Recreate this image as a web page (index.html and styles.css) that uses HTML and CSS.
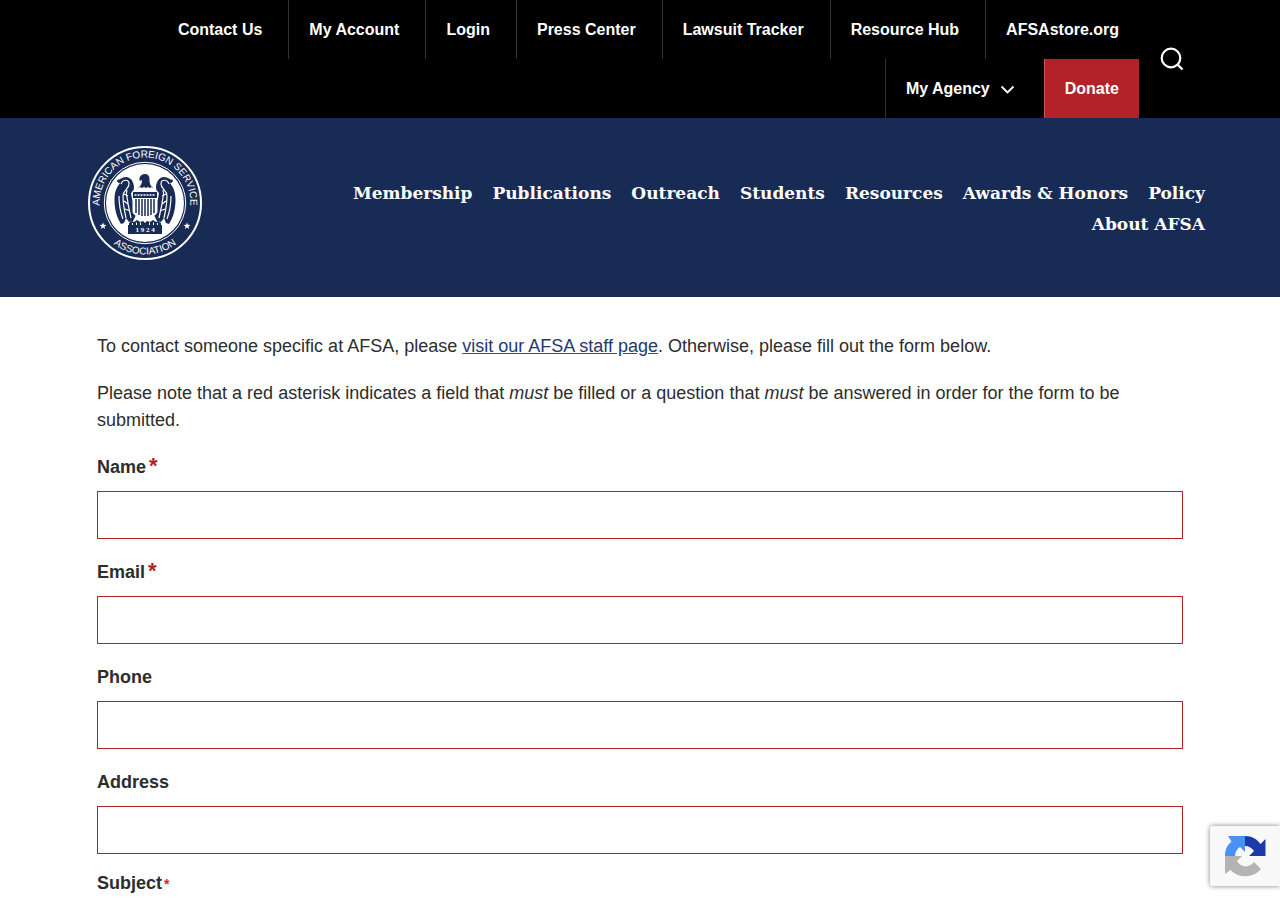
FILE: index.html
```html
<!DOCTYPE html>
<html lang="en">
<head>
<meta charset="utf-8">
<meta name="viewport" content="width=device-width, initial-scale=1">
<title>Contact AFSA</title>
<link rel="stylesheet" href="styles.css">
</head>
<body>
<div class="topbar">
  <div class="topbar-inner">
    <nav class="utility" aria-label="Utility">
      <a href="#">Contact Us</a>
      <a href="#">My Account</a>
      <a href="#">Login</a>
      <a href="#">Press Center</a>
      <a href="#">Lawsuit Tracker</a>
      <a href="#">Resource Hub</a>
      <a href="#">AFSAstore.org</a>
      <a href="#" class="has-menu">My Agency
        <svg class="chevron" width="28" height="16" viewBox="0 0 28 16" aria-hidden="true"><path d="M11.500 5.500l6 6 6-6" fill="none" stroke="#fff" stroke-width="1.800"/></svg></a>
      <a href="#" class="donate">Donate</a>
    </nav>
    <button class="search" type="button" aria-label="Search">
      <svg width="24" height="24" viewBox="0 0 24 24" aria-hidden="true"><circle cx="11" cy="11" r="9.300" fill="none" stroke="#fff" stroke-width="2.200"/><path d="M17.500 17.500l5 5" stroke="#fff" stroke-width="2.400"/></svg>
    </button>
  </div>
</div>
<header class="masthead">
  <a href="#" class="logo" aria-label="American Foreign Service Association">
    <svg width="114" height="114" viewBox="0 0 114 114">
      <defs>
        <path id="arc-top" d="M14.200 72A45.400 45.400 0 1 1 99.800 72"/>
        <path id="arc-bottom" d="M8.300 74A51.600 51.600 0 0 0 105.700 74"/>
        <g id="wing">
          <path fill="#182b55" d="M46 42c0-6-3-11-8-11-4 0-6 3-9 3 0 2 1 3 3 3-4 5-5.500 10-5.500 17 0 9 2 17 6.500 24l3-1 2-5 3 4 4-1 3-6-1-9-3-7-1-6c2-2 3-3 3-6z"/>
          <path fill="none" stroke="#fff" stroke-width="1.200" d="M33 38c2-5 8-5 8 0 0 5-6 6-6 12 0 8 1 13 3 22M39 44c-2 5 1 8 1 14l3 14M31 50c0 8 1 15 4 23M36 48l4 2M36 55l4 3M37 63l5 2"/>
          <path fill="#182b55" d="M41 80v-3l3-2 2 1 3-2 3 2 3-1 2 2v3z"/>
          <path d="M44.500 77v2.500m4-3v3m4-3v3" stroke="#fff" stroke-width="1"/>
        </g>
        <path id="star" d="M0-3.600L.9-1.200 3.500-1.100 1.400.5 2.200 3 0 1.500-2.200 3-1.400.5-3.500-1.100-.9-1.200z" fill="#fff"/>
      </defs>
      <circle cx="57" cy="57" r="56" fill="#182b55" stroke="#fff" stroke-width="2"/>
      <circle cx="57" cy="57" r="40.700" fill="#182b55" stroke="#fff" stroke-width="1"/>
      <circle cx="57" cy="57" r="39" fill="#fff"/>
      <text class="seal-text"><textPath href="#arc-top" startOffset="50%">AMERICAN FOREIGN SERVICE</textPath></text>
      <text class="seal-text"><textPath href="#arc-bottom" startOffset="50%">ASSOCIATION</textPath></text>
      <use href="#star" x="15" y="80"/><use href="#star" x="99" y="80"/>
      <path d="M44 43h26v21c0 6-6 8-13 12-7-4-13-6-13-12z" fill="#fff"/>
      <use href="#wing"/><use href="#wing" transform="translate(114 0) scale(-1 1)"/>
      <path fill="#182b55" d="M51.500 32c1-3 3-4 5.500-4 3 0 4.500 2 4.500 5 0 4 .5 6 3.500 9H50c3-2 4-5 4-8l-2.500 1z"/>
      <path d="M50 42.500l2-1.500 2 1.500 2-1.500 2 1.500 2-1.500 2 1.500 2-1.500" stroke="#fff" stroke-width=".8" fill="none"/>
      <path d="M44.500 45h25v20c0 4-5 6-12.500 9-7.500-3-12.500-5-12.500-9z" fill="#fff"/>
      <path fill="#182b55" d="M45 46h24v6H45z"/>
      <path d="M46.500 49h21" stroke="#fff" stroke-width="1.600" stroke-dasharray="2 1"/>
      <path d="M48 53v14M51 53v16M54 53v17M57 53v17M60 53v17M63 53v16M66 53v14" stroke="#182b55" stroke-width="1.500"/>
      <path fill="#182b55" d="M40 79h34v9H40z"/>
      <text class="seal-year" x="57" y="86">1 9 2 4</text>
    </svg>
  </a>
  <nav class="main-nav" aria-label="Main">
    <a href="#">Membership</a>
    <a href="#">Publications</a>
    <a href="#">Outreach</a>
    <a href="#">Students</a>
    <a href="#">Resources</a>
    <a href="#">Awards &amp; Honors</a>
    <a href="#">Policy</a>
    <a href="#">About AFSA</a>
  </nav>
</header>
<main class="content">
  <p>To contact someone specific at AFSA, please <a href="#">visit our AFSA staff page</a>. Otherwise, please fill out the form below.</p>
  <p>Please note that a red asterisk indicates a field that <em>must</em> be filled or a question that <em>must</em> be answered in order for the form to be submitted.</p>
  <form>
    <div class="field"><label for="name">Name<span class="required">*</span></label><input id="name" type="text" required></div>
    <div class="field"><label for="email">Email<span class="required">*</span></label><input id="email" type="email" required></div>
    <div class="field"><label for="phone">Phone</label><input id="phone" type="tel"></div>
    <div class="field last"><label for="address">Address</label><input id="address" type="text"></div>
    <div class="subject">Subject<span class="required-small">*</span></div>
  </form>
</main>
<aside class="recaptcha" aria-label="reCAPTCHA">
  <svg width="42" height="42" viewBox="0 0 42 42" aria-hidden="true">
    <path fill="#4a90f5" d="M21 1v16l-5-5c-3 2-5 5-5 9H1C1 15 3 10 7.500 6.500L4 1z"/>
    <path fill="#1c3aa9" d="M21 1c7 0 12 3 15.500 8L41.500 4v17H25l5-5c-2-3-5-5-9-5z"/>
    <path fill="#b4b4b4" d="M1 21h17l-5 5c4 7 12 7 17 1l7 7c-8 9-22 10-30.500 1L1 39z"/>
  </svg>
</aside>
</body>
</html>
```
FILE: styles.css
```css
* { box-sizing: border-box; }

body {
  margin: 0;
  color: #2d2d2d;
  background: #fff;
  font: 18px/27px "Liberation Sans", Arial, sans-serif;
}

.topbar { background: #000; }

.topbar-inner {
  display: flex;
  align-items: center;
  justify-content: flex-end;
  gap: 21px;
  padding: 0 96px;
}

.utility {
  flex: 1;
  display: flex;
  flex-wrap: wrap;
  justify-content: flex-end;
  column-gap: 6px;
}

.utility a {
  display: flex;
  align-items: center;
  height: 59px;
  padding: 0 20px;
  border-left: 1px solid #333;
  color: #fff;
  font-size: 16px;
  font-weight: 700;
  text-decoration: none;
}

.utility a:first-child { border-left: 0; }

.utility .donate {
  background: #b22329;
  border-left-color: #c8555a;
}

.search {
  display: flex;
  padding: 0;
  border: 0;
  background: none;
  cursor: pointer;
}

.masthead {
  display: flex;
  gap: 60px;
  padding: 28px 75px 37px 88px;
  background: #182b55;
}

.logo { display: flex; }

.seal-text {
  fill: #fff;
  font: 10px "Liberation Sans", Arial, sans-serif;
  text-anchor: middle;
}

.seal-year {
  fill: #fff;
  font: bold 7px "Liberation Serif", serif;
  text-anchor: middle;
}

.main-nav {
  flex: 1;
  display: flex;
  flex-wrap: wrap;
  align-content: center;
  justify-content: flex-end;
  column-gap: 20px;
  padding-top: 12px;
}

.main-nav a {
  color: #fff;
  font: bold 17px/31px "DejaVu Serif", serif;
  text-decoration: none;
}

.content { padding: 36px 97px 0; }

.content p { margin: 0 0 20px; }

.content p a {
  color: #1f3a72;
  text-decoration-color: #b22329;
}

.field {
  display: flex;
  flex-direction: column;
  gap: 10px;
  margin-bottom: 20px;
}

.field.last { margin-bottom: 16px; }

.field label, .subject { font-weight: 700; }

.field input {
  width: 100%;
  height: 48px;
  padding: 0 12px;
  border: 1px solid #b22329;
  background: #fff;
  font: inherit;
}

.required {
  margin-left: 3px;
  color: #b22329;
  font-size: 22px;
  line-height: 1;
}

.required-small {
  margin-left: 2px;
  color: #e02020;
  font-size: 14px;
}

.recaptcha {
  position: fixed;
  right: 0;
  bottom: 14px;
  width: 70px;
  height: 60px;
  padding: 9px 14px;
  border-radius: 2px 0 0 2px;
  background: #f9f9f9;
  box-shadow: 0 0 5px #808080;
}
```
